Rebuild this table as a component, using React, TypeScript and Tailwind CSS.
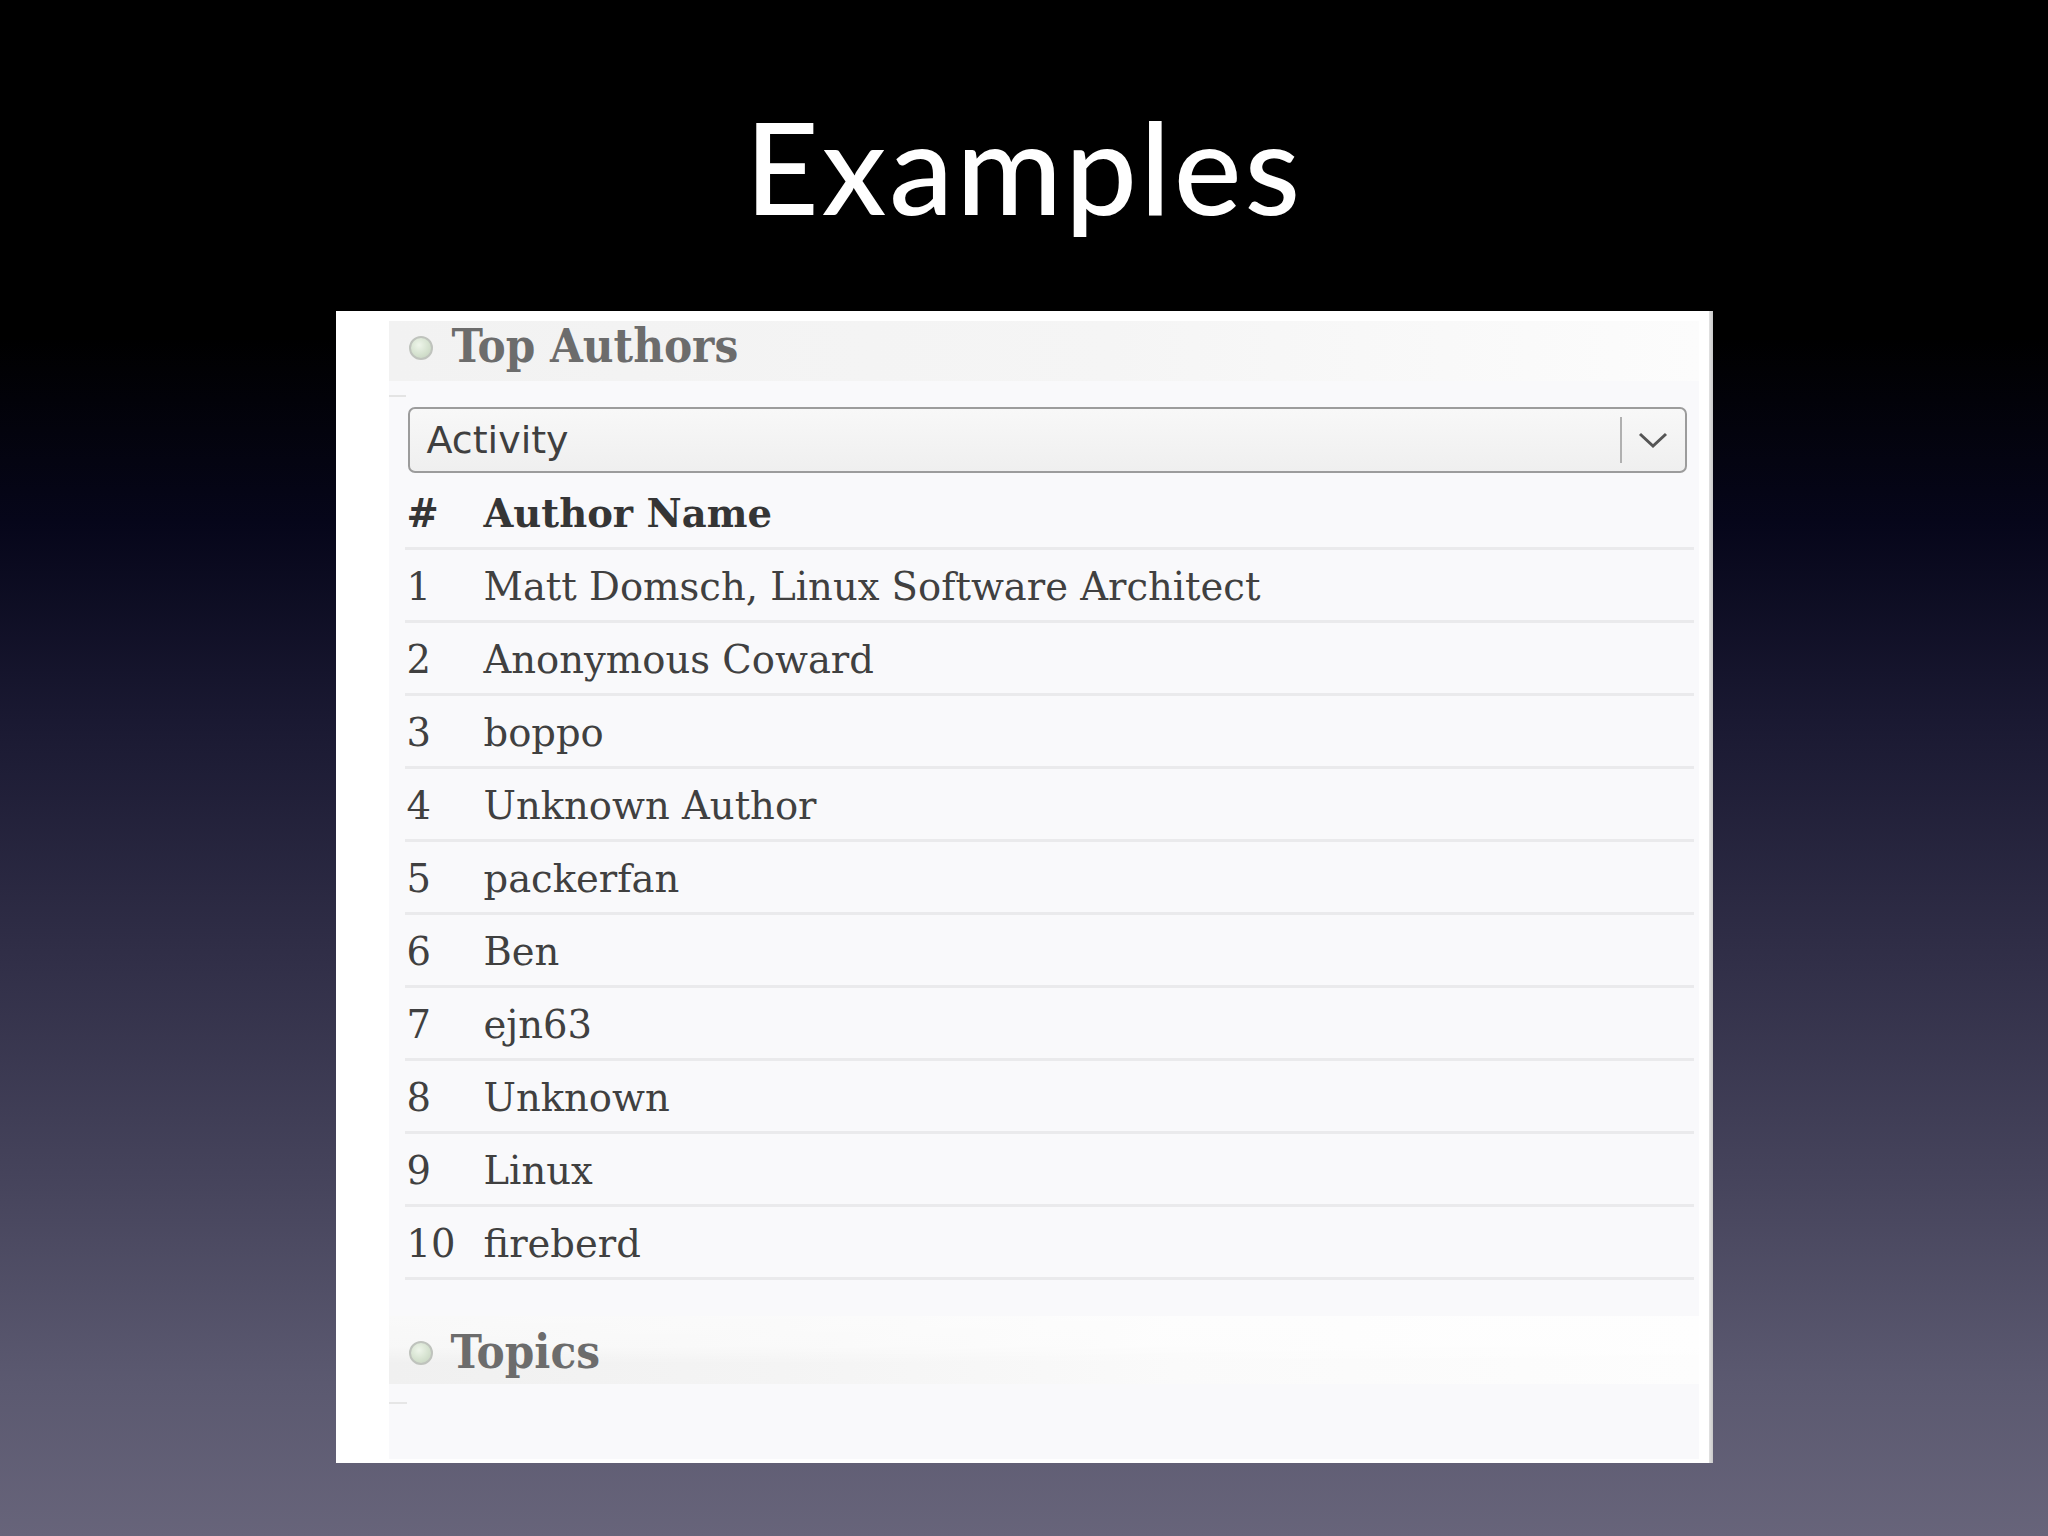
import React from "react";

const authors = [
  "Matt Domsch, Linux Software Architect",
  "Anonymous Coward",
  "boppo",
  "Unknown Author",
  "packerfan",
  "Ben",
  "ejn63",
  "Unknown",
  "Linux",
  "fireberd",
];

function Bullet({ className }: { className: string }) {
  return (
    <div
      className={
        "w-[24px] h-[24px] shrink-0 rounded-full border-2 border-[#bfc3bd] bg-[radial-gradient(circle_at_40%_35%,#eef5ea_0%,#d3e0cd_60%,#c2cdbd_100%)] " +
        className
      }
    />
  );
}

export default function App() {
  return (
    <div className="w-[2048px] h-[1536px] overflow-hidden flex flex-col items-center bg-[linear-gradient(180deg,#000_0%,#000_22%,#06061a_34%,#1a1932_47%,#302e47_62%,#46445c_77%,#5b5970_90%,#67647a_100%)]">
      <h1 className="pt-[102px] text-[128px] leading-none tracking-[3px] text-white font-['Lato',sans-serif] font-medium">
        Examples
      </h1>

      <div className="mt-[81px] w-[1377px] h-[1152px] bg-white flex">
        <div className="w-[53px] shrink-0" />

        <div className="w-[1310px] shrink-0 mt-[10px] mb-[4px] bg-[#f9f9fb] flex flex-col font-['DejaVu_Serif',serif]">
          {/* Top Authors heading */}
          <div className="h-[60px] flex items-start pl-[20px] bg-[linear-gradient(90deg,#f2f2f2_0%,#f5f5f5_55%,#fcfcfc_100%)]">
            <Bullet className="mt-[15px]" />
            <div className="ml-[19px] mt-[1px] text-[47px] leading-[48px] font-bold font-stretch-condensed font-['DejaVu_Serif_Condensed','DejaVu_Serif',serif] text-[#6c6c6c]">
              Top Authors
            </div>
          </div>
          <div className="mt-[14px] w-[17px] h-[2px] bg-[#e4e4e4]" />

          {/* Select */}
          <div className="mt-[10px] ml-[19px] w-[1279px] h-[66px] border-2 border-[#9c9c9c] rounded-[7px] bg-[linear-gradient(180deg,#f8f8f8_0%,#efefef_100%)] flex items-center">
            <div className="flex-1 pl-[17px] text-[38px] leading-[62px] text-[#3f3f3f] font-['DejaVu_Sans',sans-serif]">
              Activity
            </div>
            <div className="w-[2px] h-[46px] bg-[#b0b0b0]" />
            <div className="w-[63px] h-full flex items-center justify-center">
              <svg width="30" height="18" viewBox="0 0 30 18">
                <polyline
                  points="2,3 15,15 28,3"
                  fill="none"
                  stroke="#555"
                  strokeWidth="3"
                />
              </svg>
            </div>
          </div>

          {/* Table */}
          <div className="mt-[4px] ml-[16px] w-[1289px] flex flex-col">
            <div className="h-[73px] border-b-[3px] border-[#eaeaec] flex pt-[4px] text-[38.5px] leading-[66px] font-bold text-[#353535]">
              <div className="w-[79px] pl-[2px]">#</div>
              <div>Author Name</div>
            </div>
            {authors.map((name, i) => (
              <div
                key={i}
                className="h-[73px] border-b-[3px] border-[#eaeaec] flex pt-[4px] text-[38.5px] leading-[66px] text-[#404040]"
              >
                <div className="w-[79px] pl-[2px]">{i + 1}</div>
                <div>{name}</div>
              </div>
            ))}
          </div>

          {/* Topics heading */}
          <div className="mt-[36px] h-[68px] flex items-start pl-[20px] bg-[linear-gradient(180deg,rgba(255,255,255,0.6)_0%,rgba(255,255,255,0.5)_45%,rgba(255,255,255,0)_70%),linear-gradient(90deg,#f0f0f0_0%,#f4f4f4_30%,#fafafa_60%,#fdfdfd_100%)]">
            <Bullet className="mt-[25px]" />
            <div className="ml-[18px] mt-[12px] text-[47px] leading-[48px] font-bold font-stretch-condensed font-['DejaVu_Serif_Condensed','DejaVu_Serif',serif] text-[#6c6c6c]">
              Topics
            </div>
          </div>
          <div className="mt-[18px] w-[18px] h-[2px] bg-[#e6e6e6]" />
        </div>

        <div className="w-[10px] shrink-0" />
        <div className="w-[4px] shrink-0 bg-[linear-gradient(90deg,#e2e2e2,#c8c8c8)]" />
      </div>
    </div>
  );
}
